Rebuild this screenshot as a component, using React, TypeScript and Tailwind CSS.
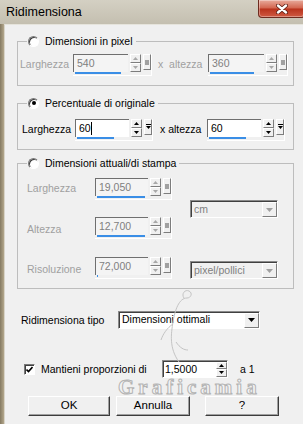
import React from 'react';

function Arrow({ up, color }: { up: boolean; color: string }) {
  return (
    <svg width="5" height="3" viewBox="0 0 5 3">
      <path d={up ? 'M2.5 0L5 3H0Z' : 'M0 0H5L2.5 3Z'} fill={color} />
    </svg>
  );
}

const raised = 'border border-t-white border-l-white border-b-[#7d7d7d] border-r-[#7d7d7d] bg-[#f0f0f0]';
const sunken = 'border border-t-[#8a8a8a] border-l-[#8a8a8a] border-b-white border-r-white';

function Spin({ disabled, h = 'h-[18px]' }: { disabled?: boolean; h?: string }) {
  const c = disabled ? '#a8a8a8' : '#000';
  return (
    <div className={`flex w-[11px] shrink-0 flex-col ${h}`}>
      <div className={`flex flex-1 items-center justify-center ${raised}`}>
        <Arrow up color={c} />
      </div>
      <div className={`flex flex-1 items-center justify-center ${raised}`}>
        <Arrow up={false} color={c} />
      </div>
    </div>
  );
}

function SquareBtn({ disabled }: { disabled?: boolean }) {
  return (
    <div className={`flex h-[16px] w-[8px] shrink-0 items-center justify-center ${raised}`}>
      {disabled ? (
        <div className="h-[5px] w-[4px] bg-[#a0a0a0]" />
      ) : (
        <svg width="5" height="6" viewBox="0 0 5 6">
          <rect x="0" y="0" width="5" height="1" fill="#000" />
          <path d="M0 2H5L2.5 5Z" fill="#000" />
        </svg>
      )}
    </div>
  );
}

function NumField({
  value,
  w,
  bar,
  disabled,
  caret,
}: {
  value: string;
  w: string;
  bar: string;
  disabled?: boolean;
  caret?: boolean;
}) {
  return (
    <div className={`flex h-[22px] shrink-0 flex-col border-r border-b border-white ${w}`}>
      <div className="flex h-[19px] items-start gap-[2px]">
        <div
          className={`flex h-full flex-1 items-start border-t border-l border-t-[#6f6f6f] border-l-[#6f6f6f] pl-[3px] leading-[17px] ${
            disabled ? 'bg-[#f4f4f4] text-[#808080]' : 'bg-white text-black'
          }`}
        >
          {value}
          {caret && <span className="mt-[2px] h-[13px] w-[1px] bg-black" />}
        </div>
        <Spin disabled={disabled} />
        <SquareBtn disabled={disabled} />
      </div>
      <div className="h-[3px] pl-[2px]">
        <div className={`h-[2px] bg-[#3a8ee6] ${bar}`} />
      </div>
    </div>
  );
}

function Dropdown({ value, w, disabled }: { value: string; w: string; disabled?: boolean }) {
  const c = disabled ? '#a0a0a0' : '#000';
  return (
    <div
      className={`flex h-[18px] shrink-0 items-stretch ${sunken} shadow-[inset_1px_1px_0_#404040] ${w} ${
        disabled ? 'bg-[#f0f0f0] text-[#808080]' : 'bg-white text-black'
      }`}
    >
      <div className="flex flex-1 items-center pl-[3px] pt-[1px]">{value}</div>
      <div className={`mt-[1px] flex w-[15px] items-center justify-center ${raised}`}>
        <svg width="7" height="4" viewBox="0 0 7 4">
          <path d="M0 0H7L3.5 4Z" fill={c} />
        </svg>
      </div>
    </div>
  );
}

function Radio({ checked }: { checked?: boolean }) {
  return (
    <div className="flex h-[11px] w-[11px] items-center justify-center rounded-full border border-t-[#7a7a7a] border-l-[#7a7a7a] border-b-white border-r-white bg-white shadow-[inset_1px_1px_0_#404040]">
      {checked && <div className="h-[4px] w-[4px] rounded-full bg-black" />}
    </div>
  );
}

function GroupHead({ label, checked }: { label: string; checked?: boolean }) {
  return (
    <div className="-mt-[8px] ml-[9px] flex h-[14px] w-fit items-center gap-[6px] bg-[#f0f0f0] pr-[3px] pl-[1px]">
      <Radio checked={checked} />
      <span className="leading-none">{label}</span>
    </div>
  );
}

function Btn({ label, w }: { label: string; w: string }) {
  return (
    <div
      className={`flex h-[20px] items-center justify-center border border-t-white border-l-white border-b-[#3c3c3c] border-r-[#3c3c3c] bg-[#f0f0f0] text-[11.5px] shadow-[inset_-1px_-1px_0_#a0a0a0] ${w}`}
    >
      {label}
    </div>
  );
}

export default function App() {
  return (
    <div className="relative flex h-[424px] w-[303px] flex-col overflow-hidden bg-[#f0f0f0] font-['Liberation_Sans',Arial,sans-serif] text-[10.5px] text-black">
      {/* title bar */}
      <div className="flex h-[24px] shrink-0 items-start justify-between bg-[linear-gradient(to_bottom,#d4d0c3,#c4bfb0)]">
        <span className="pt-[6px] pl-[6px] text-[12.5px] leading-none">Ridimensiona</span>
        <div className="-mr-[2px] flex h-[18px] w-[47px] items-center justify-center rounded-b-[4px] border border-t-0 border-[#6e2b1f] bg-[linear-gradient(to_bottom,#e8ab9c,#d2644e_48%,#b8321c_52%,#cf5a42)] shadow-[inset_0_0_0_1px_rgba(255,255,255,0.35)]">
          <svg width="12" height="10" viewBox="0 0 12 10">
            <path d="M2 1.5L10 8.5M10 1.5L2 8.5" stroke="#5a1a10" strokeWidth="4" strokeLinecap="round" />
            <path d="M2 1.5L10 8.5M10 1.5L2 8.5" stroke="#fff" strokeWidth="2.4" strokeLinecap="round" />
          </svg>
        </div>
      </div>

      <div className="flex flex-1">
        <div className="w-[4px] shrink-0 bg-[linear-gradient(to_right,#857a62,#b3a78c)]" />
        <div className="flex flex-1 flex-col border-t border-l border-t-[#e6e4dc] border-l-[#d8d4c8]">
          {/* Dimensioni in pixel */}
          <div className="mt-[16px] ml-[12px] flex h-[45px] w-[277px] flex-col border border-[#bdbdbd]">
            <GroupHead label="Dimensioni in pixel" />
            <div className="mt-[6px] flex items-center pl-[2px] text-[#a0a0a0]">
              <span className="w-[53px]">Larghezza</span>
              <NumField value="540" w="w-[79px]" bar="w-[46px]" disabled />
              <span className="w-[56px] pl-[6px]">x&nbsp;&nbsp;altezza</span>
              <NumField value="360" w="w-[80px]" bar="w-[44px]" disabled />
            </div>
          </div>

          {/* Percentuale di originale */}
          <div className="mt-[17px] ml-[12px] flex h-[47px] w-[277px] flex-col border border-[#bdbdbd]">
            <GroupHead label="Percentuale di originale" checked />
            <div className="mt-[9px] flex items-center pl-[4px]">
              <span className="w-[53px]">Larghezza</span>
              <NumField value="60" w="w-[78px]" bar="w-[37px]" caret />
              <span className="w-[54px] pl-[7px]">x altezza</span>
              <NumField value="60" w="w-[78px]" bar="w-[37px]" />
            </div>
          </div>

          {/* Dimensioni attuali/di stampa */}
          <div className="mt-[13px] ml-[12px] flex h-[126px] w-[277px] flex-col border border-[#bdbdbd]">
            <GroupHead label="Dimensioni attuali/di stampa" />
            <div className="flex">
              <div className="flex flex-col pl-[9px] text-[#a0a0a0]">
                <div className="mt-[8px] flex items-center">
                  <span className="w-[68px]">Larghezza</span>
                  <NumField value="19,050" w="w-[77px]" bar="w-[48px]" disabled />
                </div>
                <div className="mt-[17px] flex items-center">
                  <span className="w-[68px] pt-[4px]">Altezza</span>
                  <NumField value="12,700" w="w-[77px]" bar="w-[48px]" disabled />
                </div>
                <div className="mt-[18px] flex items-center">
                  <span className="w-[68px] pt-[4px]">Risoluzione</span>
                  <NumField value="72,000" w="w-[77px]" bar="w-[1px]" disabled />
                </div>
              </div>
              <div className="ml-[18px] flex flex-col">
                <div className="mt-[30px]">
                  <Dropdown value="cm" w="w-[88px]" disabled />
                </div>
                <div className="mt-[43px]">
                  <Dropdown value="pixel/pollici" w="w-[88px]" disabled />
                </div>
              </div>
            </div>
          </div>

          {/* Ridimensiona tipo */}
          <div className="mt-[22px] ml-[16px] flex h-[17px] items-center">
            <span className="w-[97px] pt-[2px]">Ridimensiona tipo</span>
            <Dropdown value="Dimensioni ottimali" w="w-[142px]" />
          </div>

          {/* Mantieni proporzioni */}
          <div className="mt-[32px] ml-[19px] flex h-[18px] items-center">
            <div className="flex h-[11px] w-[11px] items-center justify-center border border-t-[#7a7a7a] border-l-[#7a7a7a] border-b-white border-r-white bg-white shadow-[inset_1px_1px_0_#404040]">
              <svg width="7" height="7" viewBox="0 0 7 7">
                <path d="M0.5 3.5L2.5 5.5L6.5 1" stroke="#000" strokeWidth="1.6" fill="none" />
              </svg>
            </div>
            <span className="ml-[6px] w-[121px] pt-[2px]">Mantieni proporzioni di</span>
            <div className={`flex h-[18px] w-[66px] items-center ${sunken} bg-white shadow-[inset_1px_1px_0_#404040]`}>
              <span className="flex-1 pt-[1px] pl-[2px]">1,5000</span>
              <Spin h="h-[15px]" />
            </div>
            <span className="ml-[12px] pt-[2px]">a 1</span>
          </div>

          {/* buttons */}
          <div className="mt-[18px] ml-[23px] flex">
            <Btn label="OK" w="w-[82px]" />
            <div className="ml-[6px]">
              <Btn label="Annulla" w="w-[74px]" />
            </div>
            <div className="ml-[15px]">
              <Btn label="?" w="w-[74px]" />
            </div>
          </div>
        </div>
      </div>

      {/* watermark */}
      <svg
        className="pointer-events-none absolute top-[284px] left-[150px]"
        width="50"
        height="100"
        viewBox="0 0 50 100"
        fill="none"
      >
        <path
          d="M34 14c-3-4 1-9 5-7s2 7-2 7c-8 0-12 12-14 24s-4 26 6 40M23 40c-6 4-10 10-12 16M26 58c4 6 8 8 12 8"
          stroke="#c4c4c4"
          strokeWidth="1"
        />
      </svg>
      <span className="pointer-events-none absolute top-[377px] left-[118px] font-['Liberation_Serif',serif] text-[21px] leading-none font-bold tracking-[4px] text-[#f3f3f3] [-webkit-text-stroke:1px_#b4b4b4]">
        Graficamia
      </span>
    </div>
  );
}
